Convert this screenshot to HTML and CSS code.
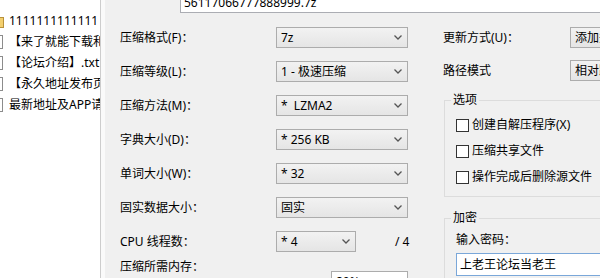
FILE: index.html
```html
<!DOCTYPE html>
<html lang="zh-CN">
<head>
<meta charset="utf-8">
<title>添加到压缩包</title>
<link rel="stylesheet" href="styles.css">
</head>
<body>
<div class="screen">
  <aside class="files">
    <div class="file"><svg class="ico" viewBox="0 0 16 16"><rect x="1.5" y="4.5" width="13" height="10" fill="#f3cf6e" stroke="#b8913a"/><rect x="1.5" y="2.5" width="6" height="2" fill="#f3cf6e" stroke="#b8913a"/></svg><span class="fname">1111111111111</span></div>
    <div class="file"><svg class="ico" viewBox="0 0 16 16"><rect x="2.5" y="1.5" width="11" height="13" fill="#fff" stroke="#8c8c8c"/><path d="M5 5h6M5 7h6M5 9h6M5 11h6" stroke="#a8a8a8"/></svg><span class="fname">【来了就能下载和分享】.txt</span></div>
    <div class="file"><svg class="ico" viewBox="0 0 16 16"><rect x="2.5" y="1.5" width="11" height="13" fill="#fff" stroke="#8c8c8c"/><path d="M5 5h6M5 7h6M5 9h6M5 11h6" stroke="#a8a8a8"/></svg><span class="fname">【论坛介绍】.txt</span></div>
    <div class="file"><svg class="ico" viewBox="0 0 16 16"><rect x="2.5" y="1.5" width="11" height="13" fill="#fff" stroke="#8c8c8c"/><path d="M5 5h6M5 7h6M5 9h6M5 11h6" stroke="#a8a8a8"/></svg><span class="fname">【永久地址发布页】.txt</span></div>
    <div class="file"><svg class="ico" viewBox="0 0 16 16"><rect x="2.5" y="1.5" width="11" height="13" fill="#fff" stroke="#8c8c8c"/><path d="M5 5h6M5 7h6M5 9h6M5 11h6" stroke="#a8a8a8"/></svg><span class="fname">最新地址及APP请看这里.txt</span></div>
  </aside>
  <div class="strip"></div>
  <main class="dialog">
    <div class="name-input">56117066777888999.7z</div>
    <div class="cols">
      <div class="col-left">
        <div class="row"><span class="label">压缩格式(F)：</span><div class="select"><span>7z</span><svg class="chev" viewBox="0 0 8 5"><path d="M0.5 0.5L4 4L7.5 0.5"/></svg></div></div>
        <div class="row"><span class="label">压缩等级(L)：</span><div class="select"><span>1 - 极速压缩</span><svg class="chev" viewBox="0 0 8 5"><path d="M0.5 0.5L4 4L7.5 0.5"/></svg></div></div>
        <div class="row"><span class="label">压缩方法(M)：</span><div class="select"><span>*&nbsp; LZMA2</span><svg class="chev" viewBox="0 0 8 5"><path d="M0.5 0.5L4 4L7.5 0.5"/></svg></div></div>
        <div class="row"><span class="label">字典大小(D)：</span><div class="select"><span>* 256 KB</span><svg class="chev" viewBox="0 0 8 5"><path d="M0.5 0.5L4 4L7.5 0.5"/></svg></div></div>
        <div class="row"><span class="label">单词大小(W)：</span><div class="select"><span>* 32</span><svg class="chev" viewBox="0 0 8 5"><path d="M0.5 0.5L4 4L7.5 0.5"/></svg></div></div>
        <div class="row"><span class="label">固实数据大小：</span><div class="select"><span>固实</span><svg class="chev" viewBox="0 0 8 5"><path d="M0.5 0.5L4 4L7.5 0.5"/></svg></div></div>
        <div class="row"><span class="label">CPU 线程数：</span><div class="select select-short"><span>* 4</span><svg class="chev" viewBox="0 0 8 5"><path d="M0.5 0.5L4 4L7.5 0.5"/></svg></div><span class="threads">/ 4</span></div>
        <div class="row row-mem"><span class="label">压缩所需内存：</span><div class="mem-box">80%</div></div>
      </div>
      <div class="col-right">
        <div class="row"><span class="r-label">更新方式(U)：</span><div class="select r-select"><span>添加并替换文件</span></div></div>
        <div class="row row-path"><span class="r-label">路径模式</span><div class="select r-select"><span>相对路径</span></div></div>
        <fieldset class="group">
          <legend>选项</legend>
          <div class="check"><span class="box"></span>创建自解压程序(X)</div>
          <div class="check"><span class="box"></span>压缩共享文件</div>
          <div class="check"><span class="box"></span>操作完成后删除源文件</div>
        </fieldset>
        <fieldset class="group group-enc">
          <legend>加密</legend>
          <div class="pw-label">输入密码：</div>
          <div class="pw-input">上老王论坛当老王</div>
        </fieldset>
      </div>
    </div>
  </main>
</div>
</body>
</html>
```
FILE: styles.css
```css
html, body {
  margin: 0;
  padding: 0;
  width: 600px;
  height: 278px;
  overflow: hidden;
}
body {
  font: 12px/16px "Noto Sans", "Noto Sans CJK SC", sans-serif;
  color: #000;
  background: #f0f0f0;
}
.screen {
  display: flex;
  height: 278px;
}
.files {
  flex: none;
  width: 100px;
  background: #fff;
  border-right: 1px solid #cdcdcd;
  padding-top: 10px;
  overflow: hidden;
}
.file {
  display: flex;
  align-items: center;
  height: 21px;
  white-space: nowrap;
}
.ico {
  flex: none;
  width: 16px;
  height: 16px;
  margin-left: -11px;
  margin-right: 4px;
}
.fname {
  white-space: nowrap;
}
.strip {
  flex: none;
  width: 4px;
  background: #fafafa;
}
.dialog {
  flex: 1;
  min-width: 0;
  background: #f0f0f0;
  overflow: hidden;
}
.name-input {
  margin: -8px -40px 0 75px;
  height: 21px;
  box-sizing: border-box;
  border: 1px solid #abadb3;
  background: #fff;
  padding-left: 3px;
  line-height: 19px;
  white-space: nowrap;
}
.cols {
  display: flex;
  margin-top: 14px;
  padding-left: 15px;
}
.col-left {
  flex: none;
  width: 288px;
  display: flex;
  flex-direction: column;
  gap: 13px;
}
.row {
  display: flex;
  align-items: center;
  height: 21px;
  white-space: nowrap;
}
.label {
  flex: none;
  width: 156px;
}
.select {
  flex: none;
  width: 132px;
  height: 21px;
  box-sizing: border-box;
  border: 1px solid #acacac;
  background: linear-gradient(#f2f2f2, #e5e5e5);
  display: flex;
  align-items: center;
  justify-content: space-between;
  padding: 0 5px 0 4px;
  white-space: nowrap;
  overflow: hidden;
}
.select-short {
  width: 80px;
}
.chev {
  width: 8px;
  height: 5px;
  fill: none;
  stroke: #555;
  stroke-width: 1.3;
}
.threads {
  margin-left: 39px;
}
.row-mem {
  margin-top: -6px;
  height: 40px;
  align-items: flex-start;
}
.mem-box {
  margin: 12px 0 0 55px;
  width: 77px;
  height: 21px;
  box-sizing: border-box;
  border: 1px solid #acacac;
  background: #fff;
  padding-left: 4px;
  line-height: 19px;
}
.col-right {
  flex: none;
  width: 200px;
  margin-left: 35px;
  display: flex;
  flex-direction: column;
}
.r-label {
  flex: none;
  width: 127px;
}
.r-select {
  width: 150px;
}
.row-path {
  margin-top: 12px;
}
.group {
  margin: 11px 0 0 1px;
  padding: 4px 0 6px 11px;
  border: 1px solid #dcdcdc;
  width: 200px;
  min-width: 0;
}
.group legend {
  padding: 0 2px;
  margin-left: -5px;
  line-height: 16px;
}
.check {
  display: flex;
  align-items: center;
  height: 26px;
  white-space: nowrap;
}
.box {
  flex: none;
  width: 13px;
  height: 13px;
  box-sizing: border-box;
  border: 1px solid #333;
  background: #fff;
  margin-right: 3px;
}
.group-enc {
  margin-top: 13px;
  padding-top: 6px;
}
.pw-label {
  line-height: 16px;
}
.pw-input {
  margin-top: 5px;
  height: 23px;
  box-sizing: border-box;
  border: 1px solid #7aa7d9;
  background: #fff;
  padding-left: 3px;
  line-height: 21px;
  white-space: nowrap;
}
```
